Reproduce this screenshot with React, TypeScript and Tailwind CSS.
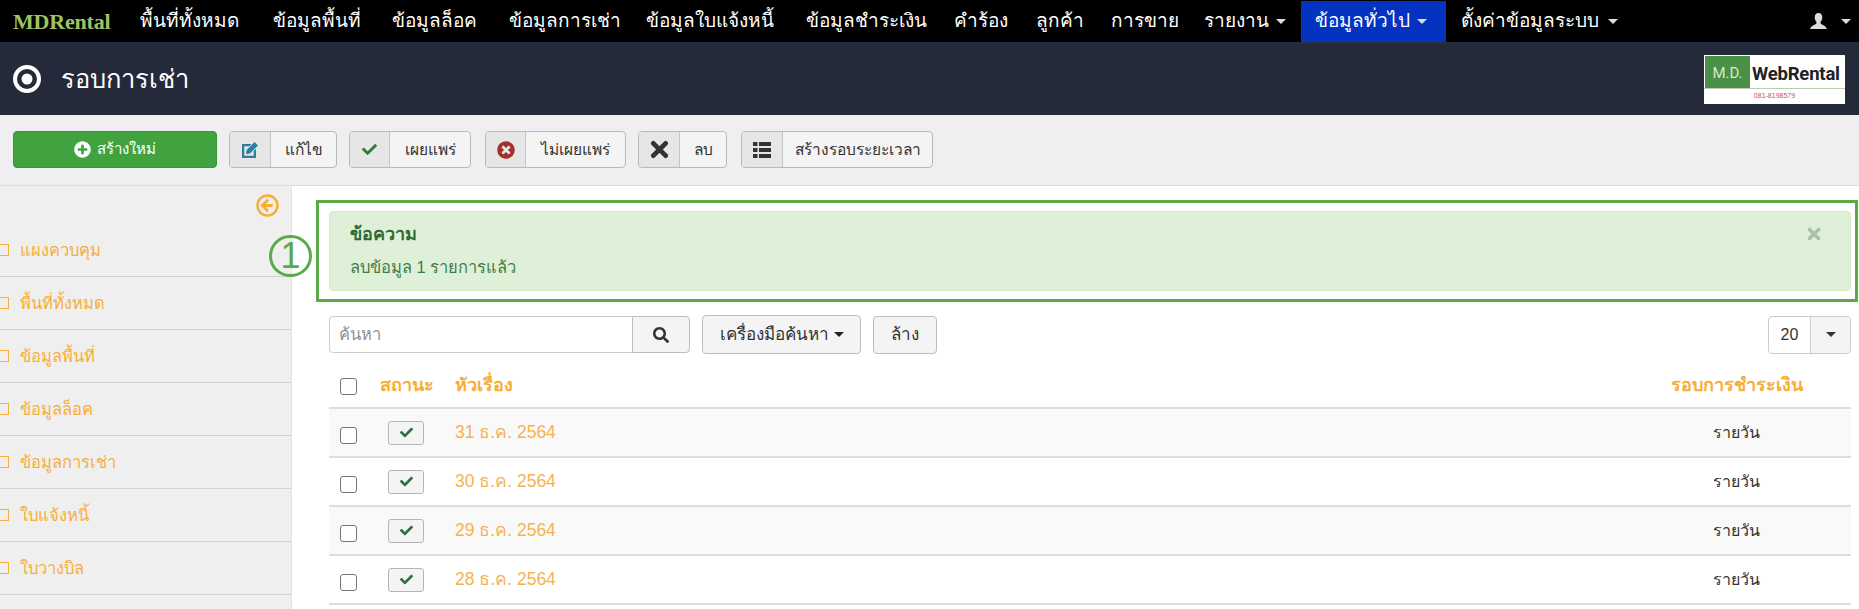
import React from "react";
import { FaCheck, FaTimesCircle, FaPlusCircle, FaSearch } from "react-icons/fa";

const Caret = ({ className = "" }: { className?: string }) => (
  <span className={`inline-block w-0 h-0 border-x-[5px] border-x-transparent border-t-[5px] ${className}`} />
);

const navItems: [string, number][] = [
  ["พื้นที่ทั้งหมด", 105],
  ["ข้อมูลพื้นที่", 91],
  ["ข้อมูลล็อค", 89],
  ["ข้อมูลการเช่า", 109],
  ["ข้อมูลใบแจ้งหนี้", 132],
  ["ข้อมูลชำระเงิน", 120],
  ["คำร้อง", 54],
  ["ลูกค้า", 47],
  ["การขาย", 65],
];

const side = ["แผงควบคุม", "พื้นที่ทั้งหมด", "ข้อมูลพื้นที่", "ข้อมูลล็อค", "ข้อมูลการเช่า", "ใบแจ้งหนี้", "ใบวางบิล"];
const rows = ["31 ธ.ค. 2564", "30 ธ.ค. 2564", "29 ธ.ค. 2564", "28 ธ.ค. 2564"];

const XIcon = ({ className = "" }: { className?: string }) => (
  <svg viewBox="0 0 20 20" className={className} fill="none" stroke="currentColor" strokeWidth="5" strokeLinecap="round">
    <path d="M3.5 3.5 16.5 16.5M16.5 3.5 3.5 16.5" />
  </svg>
);

const EditIcon = ({ className = "" }: { className?: string }) => (
  <svg viewBox="0 0 18 18" className={className} fill="currentColor">
    <path d="M1 3h9.5L8.3 5.3H3.3v9.4h9.4V10L15 7.7V17H1z" />
    <path d="M13.6 1 17 4.4 9 12.4l-4 .6.6-4z" />
  </svg>
);

const ListIcon = ({ className = "" }: { className?: string }) => (
  <svg viewBox="0 0 18 18" className={className} fill="currentColor">
    <rect x="0" y="1" width="4.5" height="4" />
    <rect x="6" y="1" width="12" height="4" />
    <rect x="0" y="7" width="4.5" height="4" />
    <rect x="6" y="7" width="12" height="4" />
    <rect x="0" y="13" width="4.5" height="4" />
    <rect x="6" y="13" width="12" height="4" />
  </svg>
);

const UserIcon = ({ className = "" }: { className?: string }) => (
  <svg viewBox="0 0 18 18" className={className} fill="currentColor">
    <path d="M9 0c2.6 0 4 1.900 4 4.400 0 2-.8 3.800-1.800 4.900v1.800c.3.800 5.800 2.300 6.800 5.900H0c1-3.600 6.500-5.100 6.800-5.900V9.300C5.800 8.200 5 6.400 5 4.400 5 1.900 6.400 0 9 0z" />
  </svg>
);

const ToolBtn = ({ icon, label, iconW, className }: { icon: React.ReactNode; label: string; iconW: string; className: string }) => (
  <div className={`flex h-[37px] ${className} rounded-[4px] border border-[#b9b9b9] bg-[#f4f4f4] text-[15.5px] text-[#333] overflow-hidden`}>
    <div className={`${iconW} shrink-0 flex items-center justify-center bg-[#e6e6e6] border-r border-[#c4c4c4]`}>{icon}</div>
    <div className="flex-1 flex items-center justify-center whitespace-nowrap">{label}</div>
  </div>
);

export default function App() {
  return (
    <div className="w-[1859px] h-[609px] overflow-hidden bg-white flex flex-col font-['Liberation_Sans','Noto_Sans',sans-serif] text-[#333]">
      {/* Top navigation */}
      <nav className="h-[43px] shrink-0 bg-black border-b border-[#2b3040] flex items-stretch text-white text-[19px]">
        <div className="w-[126px] pl-[13px] flex items-center font-['Liberation_Serif',serif] font-bold text-[22px] tracking-[-0.2px] text-[#9dc45f]">MDRental</div>
        {navItems.map(([t, w]) => (
          <div key={t} className="px-[14px] flex items-center whitespace-nowrap">
            <span className="inline-block text-left" style={{ width: w }}>{t}</span>
          </div>
        ))}
        <div className="w-[111px] pl-[14px] flex items-center gap-[7px] whitespace-nowrap">รายงาน<Caret className="border-t-[#ddd]" /></div>
        <div className="w-[145px] mt-px bg-[#0433bf] pl-[14px] flex items-center gap-[7px] whitespace-nowrap">ข้อมูลทั่วไป<Caret className="border-t-[#ddd]" /></div>
        <div className="pl-[15px] flex items-center gap-[9px] whitespace-nowrap">ตั้งค่าข้อมูลระบบ<Caret className="border-t-[#ddd]" /></div>
        <div className="ml-auto pr-[8px] flex items-center gap-[14px]">
          <UserIcon className="text-[#dcdcdc] w-[17px] h-[17px]" />
          <Caret className="border-t-[#dcdcdc]" />
        </div>
      </nav>

      {/* Page title */}
      <header className="h-[72px] shrink-0 bg-[#252a3a] flex items-center justify-between pl-[13px] pr-[14px]">
        <div className="flex items-center gap-[20px] text-white text-[25.5px]">
          <svg width="28" height="28" viewBox="0 0 28 28"><circle cx="14" cy="14" r="12" fill="none" stroke="#fff" strokeWidth="4" /><circle cx="14" cy="14" r="5.500" fill="#fff" /></svg>
          <span>รอบการเช่า</span>
        </div>
        <div className="w-[141px] h-[49px] bg-white flex flex-col">
          <div className="h-[34px] flex border-b border-[#b9cfb3]">
            <div className="w-[45px] mt-px ml-px bg-[#4a9147] text-[#d5e8d2] text-[15px] pt-[3px] flex items-center justify-center font-['Roboto',sans-serif]">M.D.</div>
            <div className="flex-1 pl-[2px] pt-[7px] text-[#222] font-bold text-[18.5px] leading-[24px] font-['Roboto',sans-serif] tracking-[-0.2px]">WebRental</div>
          </div>
          <div className="flex-1 flex items-center justify-center text-[7px] text-[#c0555f]">081-8198579</div>
        </div>
      </header>

      {/* Toolbar */}
      <div className="h-[71px] shrink-0 bg-[#efeff1] border-b border-[#dcdcdc] flex items-center pl-[13px] pb-px">
        <div className="w-[204px] h-[37px] rounded-[4px] bg-[#40a33f] border border-[#3a933a] text-white text-[15px] flex items-center justify-center gap-[6px]">
          <FaPlusCircle className="w-[17px] h-[17px]" />สร้างใหม่
        </div>
        <ToolBtn className="ml-[12px] w-[108px]" iconW="w-[41px]" label="แก้ไข" icon={<EditIcon className="w-[18px] h-[18px] text-[#2f7f9e]" />} />
        <ToolBtn className="ml-[12px] w-[122px]" iconW="w-[40px]" label="เผยแพร่" icon={<FaCheck className="w-[15px] h-[15px] text-[#2f7d3b]" />} />
        <ToolBtn className="ml-[14px] w-[141px]" iconW="w-[40px]" label="ไม่เผยแพร่" icon={<FaTimesCircle className="w-[18px] h-[18px] text-[#a3302a]" />} />
        <ToolBtn className="ml-[12px] w-[89px]" iconW="w-[41px]" label="ลบ" icon={<XIcon className="w-[19px] h-[19px] text-[#333]" />} />
        <ToolBtn className="ml-[14px] w-[192px]" iconW="w-[41px]" label="สร้างรอบระยะเวลา" icon={<ListIcon className="w-[18px] h-[18px] text-[#333]" />} />
      </div>

      <div className="flex-1 flex min-h-0">
        {/* Sidebar */}
        <aside className="w-[292px] shrink-0 bg-[#efefef] border-r border-[#e3e3e3]">
          <div className="h-[38px] flex justify-end items-start pt-[8px] pr-[12px]">
            <svg width="23" height="23" viewBox="0 0 23 23" fill="none" stroke="#f9ae33" strokeWidth="2.4">
              <circle cx="11.500" cy="11.500" r="10" />
              <path d="M12 5.800 6.300 11.500 12 17.200M6.800 11.500h10" strokeWidth="2.800" />
            </svg>
          </div>
          {side.map((s) => (
            <div key={s} className="h-[53px] border-b border-[#d2d2d2] flex items-center text-[16.5px] text-[#f8ae37]">
              <span className="w-[12px] h-[12px] border border-[#f8ae37] ml-[-3px] mr-[11px] shrink-0" />
              {s}
            </div>
          ))}
        </aside>

        {/* Main */}
        <main className="flex-1 min-w-0 relative">
          <div className="ml-[24px] mr-px mt-[14px] border-[3px] border-[#5aab47] px-[10px] pr-[4px] py-[8px]">
            <div className="h-[80px] rounded-[4px] bg-[#dff0d8] border border-[#d6e9c6] px-[20px] relative">
              <div className="pt-[8px] text-[18px] font-bold leading-[28px] text-[#2f6b33]">ข้อความ</div>
              <div className="mt-[5px] text-[16.5px] leading-[28px] text-[#3f7d45]">ลบข้อมูล 1 รายการแล้ว</div>
              <XIcon className="absolute right-[29px] top-[15px] w-[14px] h-[14px] text-[#a9bfa6]" />
            </div>
          </div>

          {/* annotation */}
          <div className="absolute left-[-23px] top-[49px] w-[43px] h-[42px] rounded-full border-[3px] border-[#5aab47] flex items-center justify-center text-[36px] leading-none text-[#5aab47]">1</div>

          {/* Filters */}
          <div className="ml-[37px] mr-[8px] mt-[13px] flex items-center">
            <div className="w-[304px] h-[37px] border border-[#ccc] rounded-l-[4px] flex items-center px-[9px] text-[16.5px] text-[#8f8f8f]">ค้นหา</div>
            <div className="w-[58px] h-[37px] -ml-px bg-[#f4f4f4] border border-[#bdbdbd] rounded-r-[4px] flex items-center justify-center">
              <FaSearch className="w-[16px] h-[16px] text-[#333]" />
            </div>
            <div className="ml-[12px] w-[159px] h-[39px] bg-[#f4f4f4] border border-[#bdbdbd] rounded-[4px] flex items-center justify-center gap-[5px] text-[17px]">
              เครื่องมือค้นหา<Caret className="border-t-[#222]" />
            </div>
            <div className="ml-[12px] w-[64px] h-[38px] bg-[#f4f4f4] border border-[#bdbdbd] rounded-[4px] flex items-center justify-center text-[17px]">ล้าง</div>
            <div className="ml-auto w-[83px] h-[38px] border border-[#ccc] rounded-[4px] flex overflow-hidden text-[16px]">
              <div className="w-[42px] flex items-center justify-center border-r border-[#ccc]">20</div>
              <div className="flex-1 bg-[#f4f4f4] flex items-center justify-center"><Caret className="border-t-[#333]" /></div>
            </div>
          </div>

          {/* Table */}
          <div className="ml-[37px] mr-[8px] mt-[13px]">
            <div className="h-[42px] pb-[3px] flex items-center border-b-[2px] border-[#ddd] font-bold text-[18px] text-[#f8ae37]">
              <input type="checkbox" readOnly className="ml-[11px] mt-[2px] w-[17px] h-[17px] appearance-none border border-[#767676] rounded-[3px] bg-white" />
              <div className="ml-[23px] w-[75px]">สถานะ</div>
              <div className="flex-1">หัวเรื่อง</div>
              <div className="w-[230px] pr-[48px] text-right whitespace-nowrap">รอบการชำระเงิน</div>
            </div>
            {rows.map((d, i) => (
              <div key={d} className={`h-[49px] flex items-center border-b-[2px] border-[#ddd] ${i % 2 === 0 ? "bg-[#f9f9f9]" : "bg-white"}`}>
                <input type="checkbox" readOnly className="ml-[11px] mt-[6px] w-[17px] h-[17px] appearance-none border border-[#767676] rounded-[3px] bg-white" />
                <div className="ml-[31px] w-[36px] h-[24px] rounded-[3px] bg-[#f4f4f4] border border-[#b5b5b5] flex items-center justify-center">
                  <FaCheck className="w-[13px] h-[13px] text-[#2f6f3f]" />
                </div>
                <div className="ml-[31px] flex-1 text-[17.5px] text-[#f4b350]">{d}</div>
                <div className="w-[230px] text-center text-[16px] text-[#333]">รายวัน</div>
              </div>
            ))}
          </div>
        </main>
      </div>
    </div>
  );
}
